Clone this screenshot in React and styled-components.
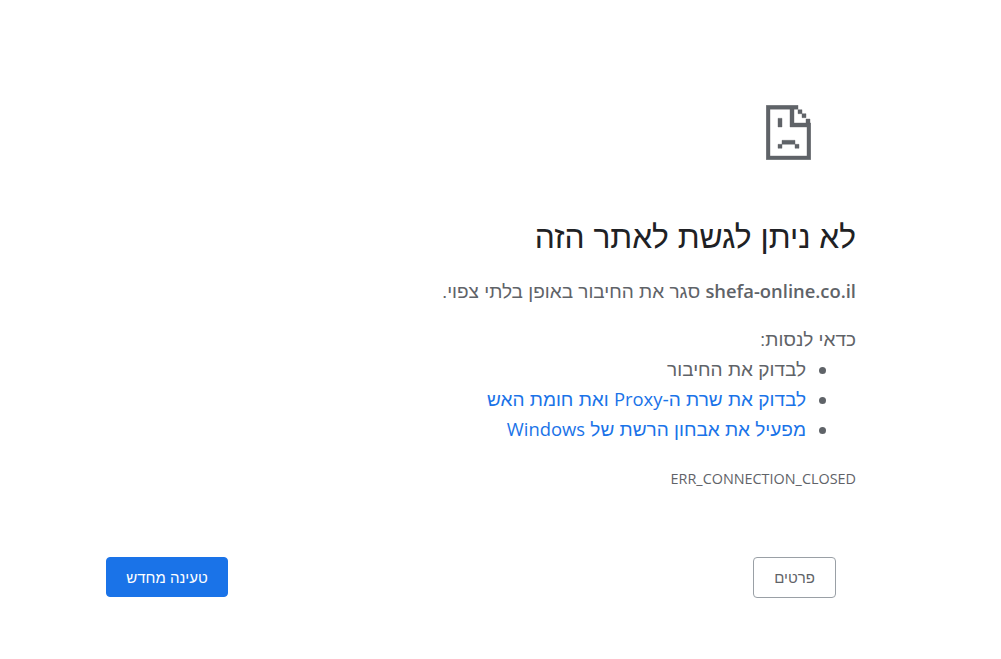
import React from 'react';
import styled, { createGlobalStyle } from 'styled-components';

const GlobalStyle = createGlobalStyle`
    html, body {
        margin: 0;
        background: #fff;
    }
    body {
        font-family: 'Liberation Sans', sans-serif;
        color: #5f6368;
    }
`;

const Page = styled.div`
    direction: rtl;
    box-sizing: border-box;
    width: 1001px;
    height: 659px;
    padding: 105px 145px 0 106px;
    overflow: hidden;
`;

const Main = styled.main`
    display: flex;
    flex-direction: column;
    align-items: flex-start;
`;

const SadPage = styled.svg`
    display: block;
    width: 45px;
    height: 55px;
    margin-right: 45px;
`;

const Heading = styled.h1`
    margin: 58px 0 0;
    font-size: 31.7px;
    font-weight: 400;
    line-height: 38px;
    color: #202124;
`;

const Lead = styled.p`
    margin: 21px 0 0;
    font-size: 19px;
    line-height: 30px;
`;

const Domain = styled.b`
    font-family: 'Open Sans', sans-serif;
    font-weight: 600;
    font-size: 18.4px;
    line-height: 1;
`;

const Latin = styled.span`
    font-family: 'Open Sans', sans-serif;
    font-size: 18.4px;
    line-height: 1;
`;

const Suggest = styled.p`
    margin: 18px 0 0;
    font-size: 19px;
    line-height: 30px;
`;

const List = styled.ul`
    margin: 0;
    padding: 0 30px 0 0;
    list-style: none;
    font-size: 19px;
    line-height: 30px;
`;

const Item = styled.li`
    display: flex;
    align-items: center;
    gap: 13px;
    &::before {
        content: '';
        width: 7px;
        height: 7px;
        border-radius: 50%;
        background: #5f6368;
    }
`;

const Link = styled.a`
    color: #1a73e8;
    text-decoration: none;
`;

const Code = styled.div`
    margin-top: 24px;
    font-family: 'Open Sans', sans-serif;
    font-size: 14.4px;
    line-height: 20px;
`;

const Nav = styled.div`
    display: flex;
    justify-content: space-between;
    align-items: flex-start;
    margin-top: 68px;
    padding-right: 20px;
`;

const Button = styled.button`
    box-sizing: border-box;
    height: ${p => (p.primary ? 40 : 41)}px;
    width: ${p => p.width}px;
    padding: 0;
    border: 1px solid ${p => (p.primary ? '#1a73e8' : '#9aa0a6')};
    border-radius: 4px;
    background: ${p => (p.primary ? '#1a73e8' : '#fff')};
    color: ${p => (p.primary ? '#fff' : '#5f6368')};
    font-family: inherit;
    font-size: 15px;
`;

const Icon = () => (
    <SadPage viewBox="0 0 45 55" fill="#5f6368" stroke="#5f6368" strokeWidth="0.4">
        <path d="M0.2 0.2h31.8v4H4v46.8h37V22H24V4h4v14h16.8v36.8H0.2z" />
        <path d="M32 4.7h4v4h-4zM36 8.7h4v4h-4zM40 14h4v4h-4z" />
        <path d="M12 13.3h4v8.7h-4z" />
        <path d="M16 35.3h13v4H16zM12 39.3h4v4h-4zM29 39.3h4v4h-4z" />
    </SadPage>
);

const App = () => (
    <Page>
        <GlobalStyle />
        <Main>
            <Icon />
            <Heading>לא ניתן לגשת לאתר הזה</Heading>
            <Lead>
                <Domain>shefa-online.co.il</Domain> סגר את החיבור באופן בלתי צפוי.
            </Lead>
            <Suggest>כדאי לנסות:</Suggest>
            <List>
                <Item>לבדוק את החיבור</Item>
                <Item>
                    <Link>לבדוק את שרת ה-<Latin>Proxy</Latin> ואת חומת האש</Link>
                </Item>
                <Item>
                    <Link>מפעיל את אבחון הרשת של <Latin>Windows</Latin></Link>
                </Item>
            </List>
            <Code>ERR_CONNECTION_CLOSED</Code>
        </Main>
        <Nav>
            <Button width={83}>פרטים</Button>
            <Button primary width={122}>טעינה מחדש</Button>
        </Nav>
    </Page>
);

export default App;
